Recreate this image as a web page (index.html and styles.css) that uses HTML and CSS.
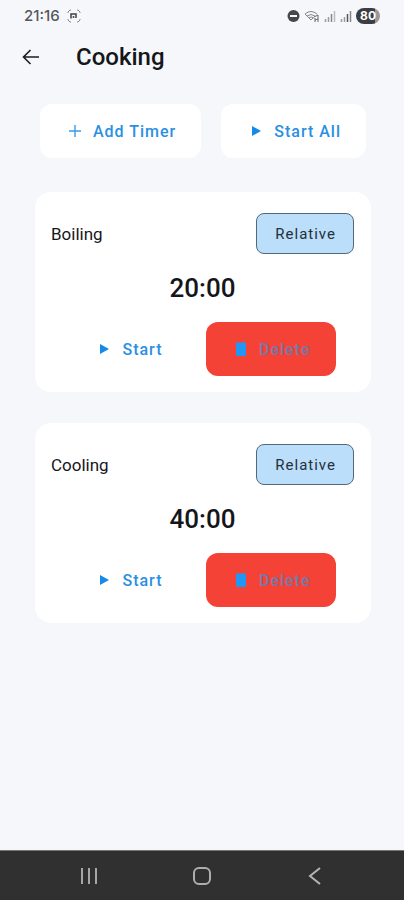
FILE: index.html
```html
<!DOCTYPE html>
<html lang="en">
<head>
<meta charset="utf-8">
<meta name="viewport" content="width=device-width, initial-scale=1">
<title>Cooking</title>
<link rel="stylesheet" href="styles.css">
</head>
<body>
<div class="status">
  <span class="clock">21:16</span>
  <svg width="14" height="14" viewBox="0 0 14 14" fill="none" stroke="#85878b" stroke-width="1"><path d="M1 4V3l2-2h1M10 1h1l2 2v1M13 10v1l-2 2h-1M4 13H3l-2-2v-1"/><path d="M4 9.500V5h5v4" stroke="#3e4044" stroke-width="1.500"/><circle cx="6.500" cy="8" r="1" fill="#3e4044" stroke="none"/></svg>
  <div class="status-icons">
    <svg width="13" height="12" viewBox="0 0 13 12"><circle cx="6.500" cy="6" r="6" fill="#45474b"/><path d="M3 6h7" stroke="#f5f7fb" stroke-width="2"/></svg>
    <svg width="16" height="13" viewBox="0 0 16 13" fill="none" stroke="#85878b" stroke-width="1"><path d="M1 4q6-5 12 0M3 6q4-3 8 0M1 4l6 6 2-2M5 8q2-2 5 0"/><path d="M10 7l4-2v4l-3 1M11 8v4M14 9v3" stroke="#65676b"/></svg>
    <svg width="12" height="12" viewBox="0 0 12 12" stroke-width="1.500"><path d="M1.500 12v-3M4.500 12V7" stroke="#9a9ca0"/><path d="M7.500 12V4" stroke="#85878b"/><path d="M10.500 12V1" stroke="#b9bbc0"/></svg>
    <svg width="12" height="12" viewBox="0 0 12 12" stroke-width="1.500"><path d="M1.500 12v-3M4.500 12V7" stroke="#9a9ca0"/><path d="M7.500 12V4" stroke="#55575b"/><path d="M10.500 12V1" stroke="#85878b"/></svg>
    <span class="battery">80</span>
  </div>
</div>
<header class="topbar">
  <button class="back" aria-label="Back"><svg width="18" height="16" viewBox="0 0 18 16" fill="none" stroke="#1c1d20" stroke-width="1.600"><path d="M17 8H2M8.500 1l-7 7 7 7"/></svg></button>
  <h1>Cooking</h1>
</header>
<main>
  <div class="actions">
    <button class="btn raised"><svg width="12" height="12" viewBox="0 0 12 12" stroke="#3b9ae6" stroke-width="1.400"><path d="M6 0v12M0 6h12"/></svg>Add Timer</button>
    <button class="btn raised"><svg width="12" height="12" viewBox="0 0 12 12" fill="#168ae8"><path d="M2 1v10l9-5z"/></svg>Start All</button>
  </div>
  <section class="card">
    <div class="card-head"><h2>Boiling</h2><button class="chip">Relative</button></div>
    <div class="time">20:00</div>
    <div class="card-actions">
      <button class="btn"><svg width="12" height="12" viewBox="0 0 12 12" fill="#168ae8"><path d="M2 1v10l9-5z"/></svg>Start</button>
      <button class="btn danger"><svg width="12" height="14" viewBox="0 0 12 14" fill="#2196f3"><path d="M1 2h10v10.500q0 1.500-1.500 1.500h-7Q1 14 1 12.500zM1 .500h10V2H1z"/></svg>Delete</button>
    </div>
  </section>
  <section class="card">
    <div class="card-head"><h2>Cooling</h2><button class="chip">Relative</button></div>
    <div class="time">40:00</div>
    <div class="card-actions">
      <button class="btn"><svg width="12" height="12" viewBox="0 0 12 12" fill="#168ae8"><path d="M2 1v10l9-5z"/></svg>Start</button>
      <button class="btn danger"><svg width="12" height="14" viewBox="0 0 12 14" fill="#2196f3"><path d="M1 2h10v10.500q0 1.500-1.500 1.500h-7Q1 14 1 12.500zM1 .500h10V2H1z"/></svg>Delete</button>
    </div>
  </section>
</main>
<nav class="navbar">
  <button aria-label="Recent apps"><svg width="20" height="18" viewBox="0 0 20 18" stroke="#a6a6a6" stroke-width="2"><path d="M3 1v16M10 1v16M17 1v16"/></svg></button>
  <button aria-label="Home"><svg width="20" height="20" viewBox="0 0 20 20" fill="none" stroke="#aeaeae" stroke-width="2"><rect x="2" y="2" width="16" height="16" rx="5"/></svg></button>
  <button aria-label="Back"><svg width="20" height="20" viewBox="0 0 20 20" fill="none" stroke="#b4b4b4" stroke-width="2"><path d="M15 2L5 10l10 8"/></svg></button>
</nav>
</body>
</html>
```
FILE: styles.css
```css
* { box-sizing: border-box; }

body {
  margin: 0;
  min-height: 100vh;
  display: flex;
  flex-direction: column;
  background: #f5f7fb;
  color: #15161a;
  font-family: Roboto, sans-serif;
}

button {
  margin: 0;
  padding: 0;
  border: 0;
  background: none;
  color: inherit;
  font: inherit;
}

svg { display: block; flex: none; }

h1, h2 { margin: 0; }

.status {
  display: flex;
  align-items: center;
  gap: 7px;
  height: 32px;
  padding: 0 24px;
}

.clock {
  font: 500 15px/16px Inter, sans-serif;
  color: #55575b;
}

.status-icons {
  display: flex;
  align-items: center;
  gap: 4px;
  margin-left: auto;
}

.battery {
  padding: 0 4px;
  border-radius: 8px;
  background: linear-gradient(90deg, #3c3d40 80%, #98999c 80%);
  color: #fff;
  font: 700 12px/16px Inter, sans-serif;
}

.topbar {
  display: flex;
  align-items: center;
  gap: 36px;
  height: 50px;
  padding: 0 22px;
}

h1 {
  font-size: 24px;
  line-height: 32px;
  font-weight: 500;
}

main {
  flex: 1;
  display: flex;
  flex-direction: column;
  gap: 31px;
  padding: 22px 33px 32px 35px;
}

.actions {
  display: flex;
  justify-content: center;
  gap: 20px;
  margin-bottom: 3px;
}

.btn {
  display: flex;
  align-items: center;
  gap: 12px;
  height: 54px;
  padding: 0 25px 0 29px;
  border-radius: 12px;
  color: #2a90e2;
  font-size: 16px;
  font-weight: 500;
  letter-spacing: 1px;
}

.raised { background: #fff; }

.card {
  padding: 21px 17px 16px 16px;
  border-radius: 16px;
  background: #fff;
}

.card-head {
  display: flex;
  align-items: center;
  justify-content: space-between;
}

h2 {
  font-size: 17px;
  line-height: 24px;
  font-weight: 400;
}

.chip {
  height: 41px;
  padding: 0 17px 0 18px;
  border: 1px solid #53687a;
  border-radius: 8px;
  background: #bbdefb;
  color: #25303a;
  font-size: 15px;
  letter-spacing: 1px;
}

.time {
  margin: 18px 0;
  font-size: 26px;
  line-height: 32px;
  font-weight: 500;
  text-align: center;
}

.card-actions {
  display: flex;
  justify-content: space-evenly;
}

.danger {
  background: #f44336;
  color: #7679a8;
}

.navbar {
  display: flex;
  align-items: center;
  justify-content: space-between;
  height: 50px;
  padding: 0 79px;
  border-top: 1px solid #777;
  background: #303030;
}
```
